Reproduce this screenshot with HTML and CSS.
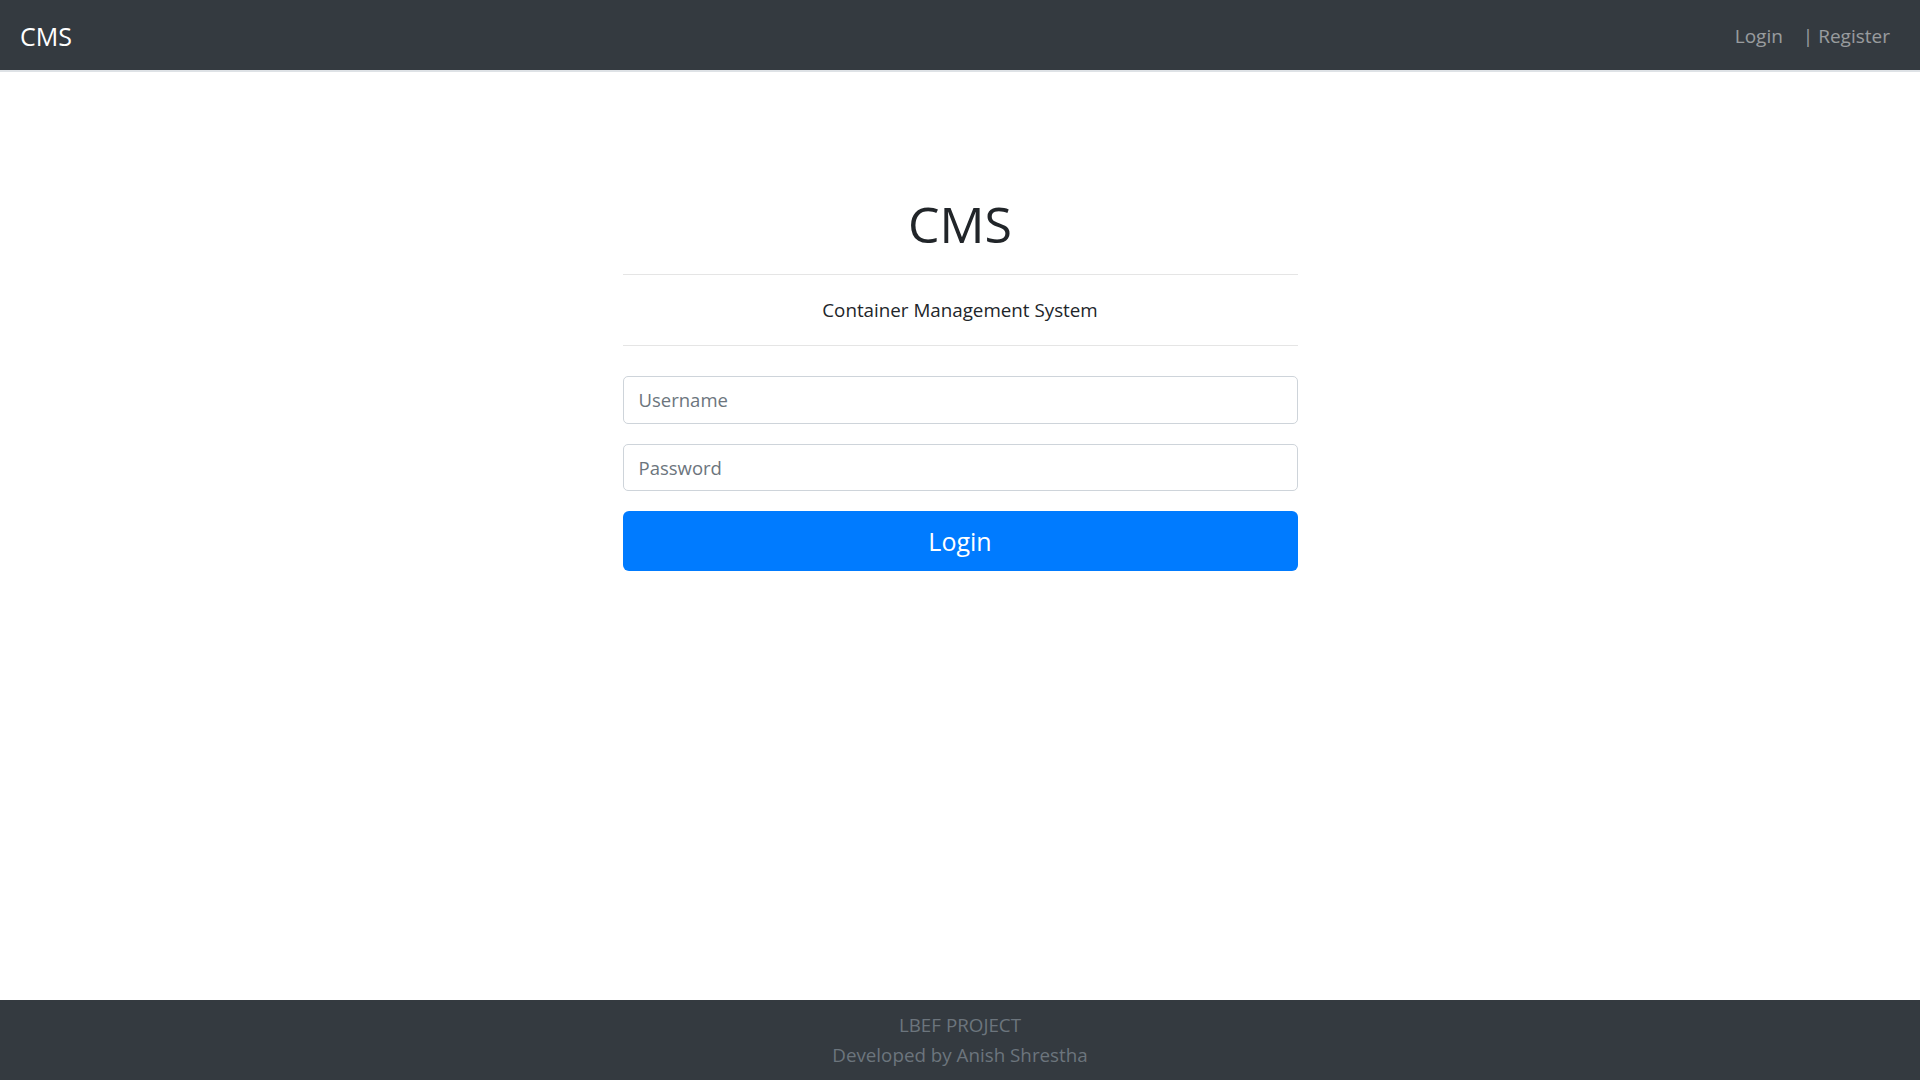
FILE: index.html
```html
<!DOCTYPE html>
<html lang="en">
<head>
<meta charset="utf-8">
<title>CMS</title>
<link rel="stylesheet" href="styles.css">
</head>
<body>
<nav class="navbar">
  <a class="brand" href="#">CMS</a>
  <div class="nav-links">
    <a class="nav-link" href="#">Login</a>
    <a class="nav-link" href="#">| Register</a>
  </div>
</nav>
<main class="main">
  <div class="login">
    <h1 class="title">CMS</h1>
    <hr class="rule">
    <p class="subtitle">Container Management System</p>
    <hr class="rule">
    <form class="form">
      <input class="field" type="text" placeholder="Username">
      <input class="field" type="password" placeholder="Password">
      <button class="btn" type="button">Login</button>
    </form>
  </div>
</main>
<footer class="footer">
  <div>LBEF PROJECT</div>
  <div>Developed by Anish Shrestha</div>
</footer>
</body>
</html>
```
FILE: styles.css
```css
html, body {
  margin: 0;
  padding: 0;
}
body {
  display: flex;
  flex-direction: column;
  min-height: 100vh;
  font-family: "Open Sans", "Noto Sans", sans-serif;
  color: #212529;
  background: #fff;
}
.navbar {
  height: 72px;
  box-sizing: border-box;
  background: #343a40;
  border-bottom: 2px solid #dee2e6;
  display: flex;
  align-items: center;
  justify-content: space-between;
  padding: 2px 20px 0;
}
.brand {
  color: #fff;
  font-size: 25px;
  text-decoration: none;
  line-height: 1;
}
.nav-links {
  display: flex;
}
.nav-link {
  color: rgba(255, 255, 255, 0.5);
  font-size: 19px;
  text-decoration: none;
  padding: 0 10px;
  line-height: 30px;
}
.main {
  flex: 1;
}
.login {
  width: 675px;
  margin: 0 auto;
  padding-top: 122px;
}
.title {
  margin: 0 0 20px;
  font-size: 50px;
  font-weight: 500;
  line-height: 60px;
  text-align: center;
  color: #212529;
}
.rule {
  border: 0;
  border-top: 1px solid rgba(0, 0, 0, 0.1);
  margin: 0;
}
.subtitle {
  margin: 20px 0;
  font-size: 18.8px;
  line-height: 30px;
  text-align: center;
}
.form {
  margin-top: 30px;
  display: flex;
  flex-direction: column;
  gap: 20px;
}
.field {
  display: block;
  width: 100%;
  height: 47.5px;
  box-sizing: border-box;
  padding: 0 15px;
  font-family: inherit;
  font-size: 18.5px;
  color: #495057;
  border: 1px solid #ced4da;
  border-radius: 5px;
  background: #fff;
  outline: none;
}
.field::placeholder {
  color: #6c757d;
  opacity: 1;
}
.btn {
  display: block;
  width: 100%;
  height: 60px;
  border: 0;
  border-radius: 6px;
  background: #007bff;
  color: #fff;
  font-family: inherit;
  font-size: 25px;
  cursor: pointer;
}
.footer {
  background: #343a40;
  color: #6c757d;
  text-align: center;
  font-size: 18.8px;
  line-height: 30px;
  padding: 10px 0;
}
```
